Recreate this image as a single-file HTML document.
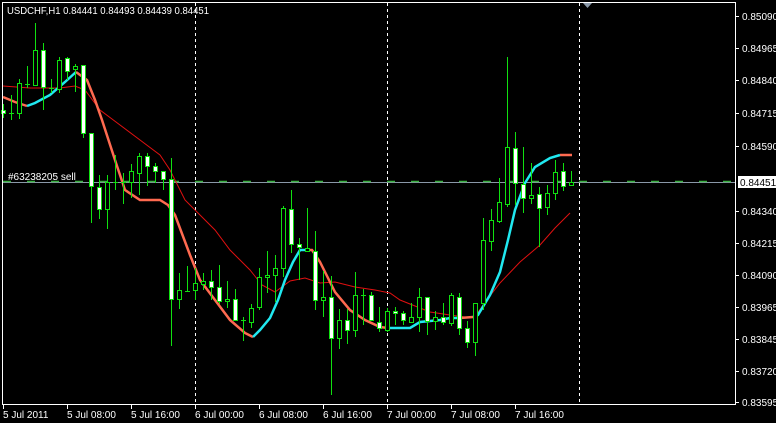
<!DOCTYPE html>
<html><head><meta charset="utf-8"><style>
html,body{margin:0;padding:0;background:#000;}
svg{display:block;}
text{font-family:"Liberation Sans",sans-serif;font-size:10px;fill:#fff;}
</style></head><body>
<svg width="776" height="423" viewBox="0 0 776 423" xmlns="http://www.w3.org/2000/svg">
<rect width="776" height="423" fill="#000"/>
<g stroke="#fff" stroke-width="1" stroke-dasharray="3,3">
<line x1="195.5" y1="3" x2="195.5" y2="405"/>
<line x1="387.5" y1="3" x2="387.5" y2="405"/>
<line x1="579.5" y1="3" x2="579.5" y2="405"/>
</g>
<line x1="3" y1="182.5" x2="736" y2="182.5" stroke="#8a98a8"/>
<line x1="3" y1="181.5" x2="736" y2="181.5" stroke="#3cb043" stroke-width="1.5" stroke-dasharray="8,16"/>
<text x="8" y="180" font-size="9.5">#63238205 sell</text>

<polyline fill="none" stroke="#e01010" stroke-width="1" points="3,86 30,88 60,88 75,86 85,90 100,110 120,125 140,140 160,155 170,170 185,200 200,215 215,230 230,250 250,270 262,285 275,292 290,281 305,278 320,283 335,282 355,287 375,290 390,293 400,300 415,306 430,312 450,315 465,317 475,317 483,305 500,283 520,262 540,245 555,228 570,213"/>
<polyline fill="none" stroke="#ff6a50" stroke-width="2.5" points="3,97 15,102 27,106"/>
<polyline fill="none" stroke="#ff6a50" stroke-width="2.5" points="76,72 87,80 95,100 102,120 115,160 125,190 140,200 160,200 168,205 175,215 190,255 200,280 215,300 230,320 245,333 253,337"/>
<polyline fill="none" stroke="#ff6a50" stroke-width="2.5" points="307,250 312,250 320,262 335,292 350,310 365,320 380,327 388,328"/>
<polyline fill="none" stroke="#ff6a50" stroke-width="2.5" points="460,318 473,317"/>
<polyline fill="none" stroke="#ff6a50" stroke-width="2.5" points="560,155 572,155"/>
<polyline fill="none" stroke="#20e8f0" stroke-width="2.5" points="27,106 35,103 50,95 65,82 76,72"/>
<polyline fill="none" stroke="#20e8f0" stroke-width="2.5" points="253,337 260,330 270,318 278,300 285,280 293,262 300,250 307,250"/>
<polyline fill="none" stroke="#20e8f0" stroke-width="2.5" points="388,328 410,328 420,322 440,320 450,318 460,318"/>
<polyline fill="none" stroke="#20e8f0" stroke-width="2.5" points="473,317 478,315 490,295 500,272 508,240 515,210 525,183 535,167 550,158 560,155"/>

<g stroke="#10e010" stroke-width="1" shape-rendering="crispEdges">
<path d="M3.5 104V118 M11.5 95V120 M19.5 79V119 M27.5 66V88 M35.5 23V85 M43.5 43V110 M51.5 79V93 M59.5 57V93 M67.5 57V80 M75.5 64V92 M83.5 65V138 M91.5 133V223 M99.5 175V219 M107.5 175V229 M115.5 155V190 M123.5 173V204 M131.5 164V198 M139.5 153V195 M147.5 153V186 M155.5 163V183 M163.5 171V190 M171.5 158V346 M179.5 273V309 M187.5 266V291 M195.5 268V300 M203.5 273V290 M211.5 270V300 M219.5 265V304 M227.5 281V308 M235.5 289V320 M243.5 317V341 M251.5 304V328 M259.5 268V310 M267.5 251V293 M275.5 255V302 M283.5 206V277 M291.5 190V253 M299.5 238V280 M307.5 208V252 M315.5 231V310 M323.5 271V317 M331.5 276V395 M339.5 309V349 M347.5 309V344 M355.5 272V337 M363.5 289V325 M371.5 292V320 M379.5 307V332 M387.5 308V332 M395.5 307V325 M403.5 311V325 M411.5 303V323 M419.5 288V332 M427.5 297V335 M435.5 311V330 M443.5 303V325 M451.5 293V326 M459.5 293V335 M467.5 321V348 M475.5 303V356 M483.5 218V310 M491.5 209V251 M499.5 178V223 M507.5 57V207 M515.5 132V205 M523.5 147V213 M531.5 163V204 M539.5 187V247 M547.5 185V215 M555.5 160V200 M563.5 163V191 M571.5 171V186"/>
<path d="M9 113.5H14 M25 84.5H30 M49 88.5H54 M113 182.5H118 M121 182.5H126 M185 291.5H190 M241 320.5H246 M361 295.5H366"/>
<g fill="#000">
<rect x="17.5" y="83.5" width="4" height="30"/><rect x="33.5" y="50.5" width="4" height="35"/><rect x="57.5" y="60.5" width="4" height="29"/><rect x="73.5" y="66.5" width="4" height="3"/>
<rect x="105.5" y="182.5" width="4" height="27"/><rect x="129.5" y="171.5" width="4" height="11"/><rect x="137.5" y="156.5" width="4" height="17"/>
<rect x="177.5" y="290.5" width="4" height="9"/><rect x="193.5" y="283.5" width="4" height="7"/><rect x="201.5" y="281.5" width="4" height="3"/><rect x="225.5" y="299.5" width="4" height="2"/>
<rect x="249.5" y="308.5" width="4" height="14"/><rect x="257.5" y="277.5" width="4" height="30"/><rect x="265.5" y="275.5" width="4" height="2"/><rect x="273.5" y="268.5" width="4" height="7"/><rect x="281.5" y="208.5" width="4" height="60"/>
<rect x="305.5" y="248.5" width="4" height="3"/><rect x="321.5" y="297.5" width="4" height="3"/><rect x="337.5" y="320.5" width="4" height="18"/><rect x="353.5" y="295.5" width="4" height="35"/>
<rect x="385.5" y="311.5" width="4" height="19"/><rect x="409.5" y="317.5" width="4" height="5"/><rect x="417.5" y="297.5" width="4" height="20"/><rect x="433.5" y="317.5" width="4" height="4"/><rect x="449.5" y="295.5" width="4" height="28"/>
<rect x="473.5" y="303.5" width="4" height="39"/><rect x="481.5" y="240.5" width="4" height="63"/><rect x="489.5" y="220.5" width="4" height="21"/><rect x="497.5" y="202.5" width="4" height="19"/><rect x="505.5" y="147.5" width="4" height="57"/>
<rect x="529.5" y="195.5" width="4" height="3"/><rect x="545.5" y="193.5" width="4" height="14"/><rect x="553.5" y="172.5" width="4" height="21"/><rect x="569.5" y="182.5" width="4" height="3"/>
</g>
<g fill="#fff">
<rect x="1.5" y="110.5" width="4" height="3"/><rect x="41.5" y="50.5" width="4" height="37"/><rect x="65.5" y="58.5" width="4" height="13"/><rect x="81.5" y="65.5" width="4" height="68"/>
<rect x="89.5" y="133.5" width="4" height="53"/><rect x="97.5" y="187.5" width="4" height="22"/><rect x="145.5" y="156.5" width="4" height="10"/><rect x="153.5" y="166.5" width="4" height="5"/><rect x="161.5" y="171.5" width="4" height="8"/>
<rect x="169.5" y="179.5" width="4" height="120"/><rect x="209.5" y="281.5" width="4" height="6"/><rect x="217.5" y="287.5" width="4" height="14"/><rect x="233.5" y="299.5" width="4" height="21"/>
<rect x="289.5" y="209.5" width="4" height="35"/><rect x="297.5" y="244.5" width="4" height="3"/><rect x="313.5" y="251.5" width="4" height="49"/><rect x="329.5" y="297.5" width="4" height="41"/><rect x="345.5" y="320.5" width="4" height="10"/>
<rect x="369.5" y="295.5" width="4" height="25"/><rect x="377.5" y="322.5" width="4" height="6"/><rect x="393.5" y="311.5" width="4" height="2"/><rect x="401.5" y="313.5" width="4" height="7"/><rect x="425.5" y="297.5" width="4" height="24"/>
<rect x="441.5" y="317.5" width="4" height="5"/><rect x="457.5" y="297.5" width="4" height="31"/><rect x="465.5" y="328.5" width="4" height="14"/>
<rect x="513.5" y="148.5" width="4" height="35"/><rect x="521.5" y="184.5" width="4" height="14"/><rect x="537.5" y="194.5" width="4" height="14"/><rect x="561.5" y="171.5" width="4" height="15"/>
</g>
</g>

<polygon points="583,3 592,3 587.5,8" fill="#8a98a8"/>
<rect x="2.5" y="2.5" width="733" height="402" fill="none" stroke="#fff"/>
<text x="7" y="14" textLength="202" lengthAdjust="spacingAndGlyphs">USDCHF,H1  0.84441 0.84493 0.84439 0.84451</text>
<g stroke="#fff"><path d="M736 16.5h3 M736 48.5h3 M736 80.5h3 M736 113.5h3 M736 146.5h3 M736 211.5h3 M736 243.5h3 M736 275.5h3 M736 307.5h3 M736 339.5h3 M736 371.5h3 M736 402.5h3"/></g>
<g>
<text x="742" y="20">0.85090</text>
<text x="742" y="52">0.84965</text>
<text x="742" y="84">0.84840</text>
<text x="742" y="117">0.84715</text>
<text x="742" y="150">0.84590</text>
<text x="742" y="215">0.84340</text>
<text x="742" y="247">0.84215</text>
<text x="742" y="279">0.84090</text>
<text x="742" y="311">0.83965</text>
<text x="742" y="343">0.83845</text>
<text x="742" y="375">0.83720</text>
<text x="742" y="406">0.83595</text>
</g>
<rect x="738" y="176" width="38" height="12" fill="#fff"/>
<text x="740" y="186" style="fill:#000">0.84451</text>
<g stroke="#fff"><path d="M3.5 405v4 M67.5 405v4 M131.5 405v4 M195.5 405v4 M259.5 405v4 M323.5 405v4 M387.5 405v4 M451.5 405v4 M515.5 405v4"/></g>
<g>
<text x="3" y="418">5 Jul 2011</text>
<text x="67" y="418">5 Jul 08:00</text>
<text x="131" y="418">5 Jul 16:00</text>
<text x="195" y="418">6 Jul 00:00</text>
<text x="259" y="418">6 Jul 08:00</text>
<text x="323" y="418">6 Jul 16:00</text>
<text x="387" y="418">7 Jul 00:00</text>
<text x="451" y="418">7 Jul 08:00</text>
<text x="515" y="418">7 Jul 16:00</text>
</g>
</svg>
</body></html>
